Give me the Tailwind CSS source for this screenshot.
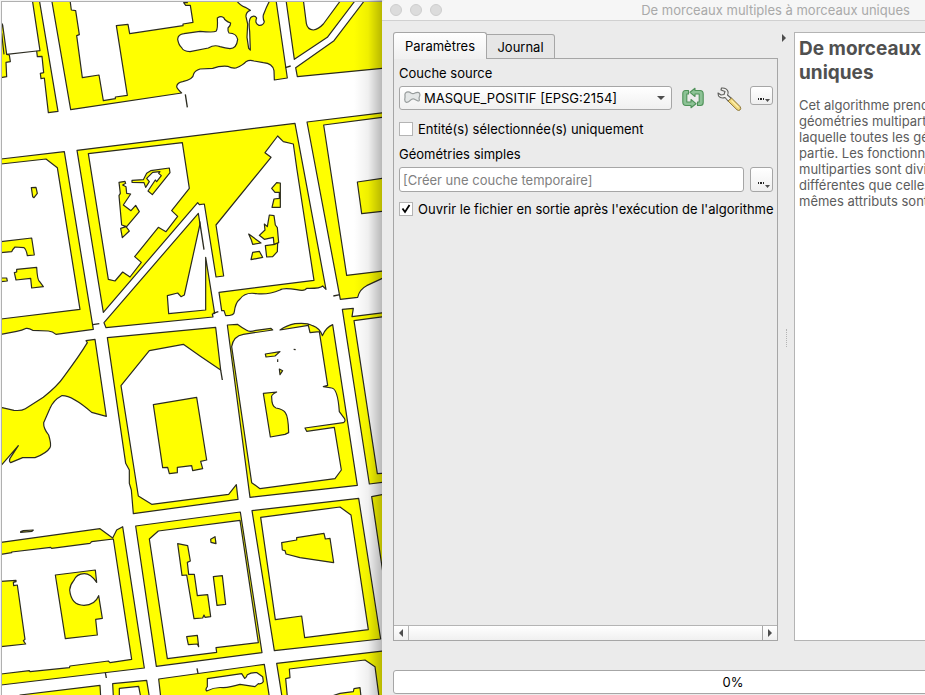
<!DOCTYPE html>
<html lang="fr">
<head>
<meta charset="utf-8">
<meta name="viewport" content="width=device-width, initial-scale=1">
<title>De morceaux multiples à morceaux uniques</title>
<script src="https://cdn.jsdelivr.net/npm/@tailwindcss/browser@4"></script>
</head>
<body class="flex h-screen overflow-hidden bg-[#ebebeb] font-['Inter','Liberation_Sans',sans-serif] text-[13px] leading-4 text-black">

<!-- Map canvas -->
<main class="relative h-full w-[382px] shrink-0 overflow-hidden bg-white">
  <svg class="h-full w-full" viewBox="0 0 1146 2085" preserveAspectRatio="xMinYMin slice" role="img" aria-label="Carte">
    <g fill="#ffff00" stroke="#2b2b20" stroke-width="3.600" stroke-linejoin="round">
      <!-- first row of blocks -->
      <path d="M97,0L120,152L110,153L112,170L126,169L131,218L121,220L123,236L133,234L145,338L174,334L118,0Z"/>
      <path d="M5,70L8,75L20,163L28,165L31,185L18,187L20,230L3,233Z"/>
      <path fill="none" d="M5,100L12,163M20,163L110,153"/>
      <path d="M155,0L212,329L545,279Q530,266 530,259Q532,248 548,245Q580,238 581,222Q584,212 600,207L638,205Q660,197 683,199Q696,206 708,204Q730,195 738,185Q748,179 762,183L790,188Q818,190 822,212L823,240L862,234L828,0Z"/>
      <path fill="#fff" d="M210,0L214,30L227,32L238,104L230,107L247,233L297,225L310,302L346,296L346,291L382,286L349,77L384,73L389,101L549,77L549,72L579,67L571,16L557,16L551,8L562,8L560,0Z"/>
      <path fill="#fff" d="M533,118Q534,103 552,101L600,94Q640,98 648,94Q654,88 652,54Q664,46 672,54Q674,62 692,69Q692,77 684,84Q683,94 687,99Q710,100 713,118Q710,145 690,146Q676,145 660,140Q643,133 625,144L570,155Q549,154 545,143Q536,135 533,118Z"/>
      <path fill="#fff" d="M708,0Q720,17 736,22L751,31Q737,36 738,50L743,72L741,112L746,145L751,150L749,95Q744,54 756,50Q764,46 770,54Q763,70 777,76Q790,77 793,65Q788,55 790,45Q798,23 810,0Z"/>
      <path d="M858,0L883,178L982,112L1067,0Z"/>
      <path fill="#fff" d="M910,0L919,70Q922,88 940,90Q955,88 970,72L1023,0Z"/>
      <path d="M1095,0L1002,122L887,203L892,230L1149,205V0Z"/>
      <path fill="none" stroke-width="4" d="M856,203L872,198M556,283L562,322"/>

      <!-- second row -->
      <path d="M3,477L193,455L280,988L168,1003Q158,994 145,993L98,991Q87,984 79,985Q66,992 50,994L3,1003Z"/>
      <path fill="#fff" d="M3,492L138,477L172,503L240,928L3,957Z"/>
      <path d="M94,563L108,562L112,580L102,593L98,590ZM3,725L95,714L103,765L82,767Q79,749 72,743L45,741Q38,748 35,755L3,758ZM50,808L110,802Q112,842 119,845L130,860L95,864L92,835L48,840L43,818L50,816ZM3,834L20,834L22,843L3,845Z"/>
      <path d="M231,451L885,370L978,868L968,858Q960,866 920,865Q915,875 890,869Q850,862 840,870Q805,885 770,881Q735,875 720,897Q706,908 703,935Q703,947 677,947L672,932L665,932L657,877L942,841L891,510L880,432L850,425L833,408L795,458L813,472L648,675L671,828L648,831L613,612L598,614L593,608L310,937Z"/>
      <path fill="#fff" d="M265,461L547,428L568,565L515,632L533,649L498,695L475,682L404,770L424,787L390,831L368,816L345,843L325,838Z"/>
      <path d="M396,541L430,539L440,520L452,512L508,504L510,518L457,584L444,573L466,540L470,545L484,527L476,520L480,515L458,517L440,535L448,545L437,562L432,548L396,547ZM357,547L375,544L377,550L368,555L378,560L380,580L392,582L370,615L393,632L407,616L418,635L380,680L365,675L357,587L361,580ZM362,685L378,680L388,693L367,713Z"/>
      <path d="M595,640L600,672L553,885L543,890L533,879L502,887L506,941L617,930L617,772L644,940L637,942L639,951L318,983L312,968Z"/>
      <path fill="none" stroke-width="4" d="M599,664L612,749M278,974L298,971M639,940L655,935M1000,888L1020,884"/>
      <path d="M815,565L830,548L841,549L841,622L816,622L822,597L838,595L838,577L825,577ZM808,645L822,647L826,675L832,683L836,728L822,733L820,712L793,718L778,706L795,690L793,672L802,680ZM796,737L825,733L833,729L832,755L818,770L800,771ZM746,702L783,729L758,733L754,720ZM758,757L778,754L788,772L753,779Z"/>
      <path d="M921,366L1149,338V352L971,375L1040,826L1149,813V834L1100,857Q1078,868 1073,892L1021,898Z"/>
      <path d="M1072,546L1149,535V634L1085,641Z"/>

      <!-- third row -->
      <path d="M258,1022L285,1018L319,1249L275,1237Q215,1185 185,1187Q160,1200 150,1225L131,1268Q130,1285 146,1305Q155,1335 150,1343Q140,1360 105,1373L68,1373L32,1388Q26,1385 30,1375L55,1337L3,1397V1222L42,1231Q65,1233 76,1226L130,1192Q175,1155 190,1132Q240,1065 262,1028Z"/>
      <path d="M322,1013L647,982L662,1110L600,1068L550,1033L448,1052L363,1157L415,1488L455,1513L686,1483L709,1454L714,1498L400,1541L394,1470L388,1450V1410L377,1390Z"/>
      <path fill="none" stroke-width="4" d="M662,1110L667,1140"/>
      <path d="M460,1214L590,1192L620,1380L602,1384L608,1406L578,1412L575,1397L532,1402V1418L508,1421L503,1402L488,1403Z"/>
      <path d="M682,975L712,973Q728,985 740,991Q748,997 768,991L813,985L818,990L730,1003Q700,1008 695,1040L755,1448L780,1466L1005,1436L1024,1410L1003,1282L920,1294L915,1284L1030,1268Q1038,1264 1033,1255L1018,1235Q1013,1165 995,1164L970,1160L983,1156L958,995L930,998L925,976L840,990Q860,976 885,971Q920,967 938,977Q960,985 967,1007Q978,982 998,974L1072,1456L750,1492Z"/>
      <path d="M796,1062L840,1055L825,1068L798,1071ZM838,1107L848,1112L840,1124ZM790,1180L830,1176Q812,1185 815,1192Q815,1220 828,1224Q850,1228 856,1238Q865,1250 866,1298L855,1303L811,1311ZM833,1078V1086M881,1048L887,1049"/>
      <path d="M1027,928L1060,925L1056,950L1149,938V950L1062,962L1132,1421L1149,1420V1447L1108,1452Z"/>

      <!-- fourth row -->
      <path d="M3,1627L300,1586L338,1614L350,1590L368,1580L433,2004L3,2055Z"/>
      <path fill="#fff" d="M3,1663L35,1658V1656L152,1642L155,1645L270,1630L275,1625L340,1617L395,1978L330,1988L325,1983L210,1998L208,2003L90,2015L88,2012L3,2022Z"/>
      <path d="M3,1744L48,1741V1745L40,1747L41,1757L52,1755L75,1918L70,1922L77,1932L3,1940ZM166,1725L286,1710L290,1747Q272,1721 253,1721C238,1721 226,1730 221,1742Q210,1755 209,1770C212,1800 228,1816 252,1816Q285,1815 296,1787L307,1855L287,1858L292,1905L196,1916ZM62,1595L70,1592L100,1590L96,1594L62,1597Z"/>
      <path d="M407,1578L721,1536L786,1958L469,1999Z"/>
      <path fill="#fff" d="M448,1617L475,1593L720,1561L775,1928L648,1943L650,1957L502,1976Z"/>
      <path d="M533,1631L563,1637L571,1683L562,1687L566,1723L583,1723L592,1787L623,1784L632,1850L615,1852L612,1845L608,1854L582,1856L560,1725L546,1726ZM640,1730L667,1727L677,1813L651,1816ZM632,1618L645,1610L648,1631L633,1627ZM560,1910L592,1906L596,1940L592,1932L565,1934Z"/>
      <path d="M756,1532L1076,1495L1142,1917L823,1952Z"/>
      <path fill="#fff" d="M782,1552L1020,1521L1053,1545L1105,1889L914,1913L905,1848L826,1859Z"/>
      <path d="M845,1628L890,1620V1613L972,1600L976,1617L990,1615L1001,1688L900,1673L858,1662L855,1652L847,1650Z"/>
      <path d="M1115,1490L1149,1483V1720Z"/>

      <!-- bottom row -->
      <path d="M60,2085L300,2056L302,2090H58ZM338,2051L440,2041L448,2090H340Z"/>
      <path fill="#fff" d="M358,2090V2065L416,2059L422,2090Z"/>
      <path d="M476,2037L793,1993L808,2090H482Z"/>
      <path fill="#fff" d="M622,2036L725,2021L734,2035Q738,2035 742,2024Q755,2016 771,2018L788,2030L790,2045Q785,2053 775,2051L765,2060L720,2053Q690,2062 670,2063Q645,2060 620,2073Q615,2068 622,2060Z"/>
      <path d="M830,1990L1149,1953V2090H846Z"/>
      <path fill="#fff" d="M868,2007L1095,1980L1125,2000L1137,2090H862L857,2036L870,2033Z"/>
      <path d="M990,2090L1020,2080L1060,2075L1062,2066L1080,2063L1083,2090Z"/>
      <path fill="none" stroke-width="4" d="M316,2018L319,2034M591,2005L594,2020"/>
    </g>
  </svg>
  <div class="pointer-events-none absolute inset-0 border-t border-l border-[#f4f4f4]">
    <div class="size-full border-t border-l border-[#b0b0b0]"></div>
  </div>
  <div class="pointer-events-none absolute inset-y-0 right-0 w-7 bg-linear-to-r from-black/0 via-black/6 to-black/28"></div>
</main>

<!-- Processing dialog, wider than the visible area -->
<section class="h-full min-w-0 flex-1 overflow-hidden" aria-labelledby="dialog-title">
  <div class="flex h-full w-[787px] flex-col">
    <header class="relative flex h-[21px] shrink-0 items-center justify-center rounded-tl-sm border-b border-[#d0d0d0] bg-[#f6f6f6]">
      <div class="absolute left-2 flex gap-2">
        <button type="button" aria-label="Fermer" class="size-3 rounded-full border border-[#cecece] bg-[#dcdcdc]"></button>
        <button type="button" aria-label="Réduire" class="size-3 rounded-full border border-[#cecece] bg-[#dcdcdc]"></button>
        <button type="button" aria-label="Agrandir" class="size-3 rounded-full border border-[#cecece] bg-[#dcdcdc]"></button>
      </div>
      <h1 id="dialog-title" class="text-[#a9a9a9]">De morceaux multiples à morceaux uniques</h1>
    </header>

    <div class="flex min-h-0 flex-1 px-[11px] pt-[11px]">
      <div class="flex w-[385px] shrink-0 flex-col">
        <div role="tablist" class="relative -mb-px flex items-end">
          <button type="button" role="tab" aria-selected="true" class="h-[27px] w-[94px] rounded-t-[3px] border border-b-0 border-[#a6a6a6] bg-linear-to-b from-white to-[#f0f0f0]">Paramètres</button>
          <button type="button" role="tab" aria-selected="false" class="h-[25px] w-[68px] rounded-tr-[3px] border border-l-0 border-[#a6a6a6] bg-[#e6e6e6]">Journal</button>
        </div>
        <div role="tabpanel" class="flex min-h-0 flex-1 flex-col border border-[#a6a6a6]">
          <form class="flex flex-1 flex-col pt-[6px] pr-1 pl-[5px]">
            <label for="source">Couche source</label>
            <div class="mt-[5px] flex items-start">
              <div class="relative w-[273px]">
                <select id="source" class="h-6 w-full appearance-none rounded-[3px] border border-[#a6a6a6] bg-linear-to-b from-white to-[#f0f0f0] pl-6">
                  <option>MASQUE_POSITIF [EPSG:2154]</option>
                </select>
                <svg class="pointer-events-none absolute top-1 left-1 h-4 w-[18px]" viewBox="0 0 18 16" fill="#e4e7e7" stroke="#969b9b" stroke-width="1.2" stroke-linejoin="round"><path d="M3.500,2.200Q6,1.500 8,3Q10,4.200 12,3Q14,1.800 16,2.600Q17.500,4 16.500,6.500Q15.800,8 16.300,9.500Q16.600,11 15,11Q13,10.200 11,9Q9,8.500 7.500,10.200Q5.500,12.500 3.500,12.300Q1.500,12 1.800,9Q2.200,7 1.900,4.500Q2,2.800 3.500,2.200Z"/></svg>
                <svg class="pointer-events-none absolute top-2.5 right-[7px] h-1 w-2" viewBox="0 0 8 4" fill="#4d4d4d"><path d="M0,0H8L4,4Z"/></svg>
              </div>
              <button type="button" aria-label="Itérer sur cette couche" class="ml-2.5">
                <svg class="h-6 w-[22px]" viewBox="0 0 22 24" fill="#8cc295" stroke="#4f9259" stroke-width="1.100" stroke-linejoin="round"><path d="M6.500,4.500H3.500Q0.800,4.500 0.800,7.500V16Q0.800,19.500 4,19.500H9V21.800L14,17.700L9,13.500V16H4.800V8H6.500Z"/><path d="M15.500,19.500H18.500Q21.200,19.500 21.200,16.500V8Q21.200,4.500 18,4.500H13V2.200L8,6.300L13,10.500V8H17.200V16H15.500Z"/></svg>
              </button>
              <button type="button" aria-label="Options avancées" class="ml-3">
                <svg class="size-[26px]" viewBox="0 0 26 26" stroke-linejoin="round"><path fill="#f1f1ef" stroke="#5d5d5a" stroke-width="1.100" d="M5.500,2Q10.500,1.500 12,5.500Q12.500,7.500 11.500,9L15.500,12.500L12.500,15.500L9,11.500Q5,13 2.500,10L2,7L5,9L8,8.500L9,5.500L5,4Z"/><path fill="#f0d77a" stroke="#8c7638" stroke-width="1" d="M12,15L15.500,12L24,20.500Q25.500,22.500 24,24Q22.500,25 21,23.800Z"/><path fill="none" stroke="#fff0ac" stroke-width="1.300" d="M15.500,14.500L22.500,21.500"/></svg>
              </button>
              <button type="button" aria-label="Options de la source" class="ml-auto h-[19px] w-[23px] rounded-[3px] border border-[#a6a6a6] bg-linear-to-b from-white to-[#efefef]">
                <svg class="h-full w-full" viewBox="0 0 21 17"><path d="M7,11h1v2h-1zM9,11h2v2h-2zM12,11h1v2h-1z" fill="#252525"/><path d="M14,12h5l-2.500,3z" fill="#4d4d4d"/></svg>
              </button>
            </div>
            <label class="mt-[9px] flex items-center gap-[5px]">
              <input type="checkbox" class="size-3.5 appearance-none border border-[#b4b4b4] bg-white">
              Entité(s) sélectionnée(s) uniquement
            </label>
            <label for="output" class="mt-[9px]">Géométries simples</label>
            <div class="mt-[5px] flex justify-between">
              <input id="output" type="text" placeholder="[Créer une couche temporaire]" class="h-[25px] w-[345px] rounded-[3px] border border-[#a6a6a6] bg-white px-[3px] placeholder:text-[#808080]">
              <button type="button" aria-label="Options de sortie" class="h-[25px] w-[23px] rounded-[3px] border border-[#a6a6a6] bg-linear-to-b from-white to-[#efefef]">
                <svg class="h-full w-full" viewBox="0 0 21 23"><path d="M7,14h1v2h-1zM9,14h2v2h-2zM12,14h1v2h-1z" fill="#252525"/><path d="M14,17h5l-2.500,3z" fill="#4d4d4d"/></svg>
              </button>
            </div>
            <label class="mt-[9px] flex items-center gap-[5px] whitespace-nowrap">
              <span class="relative flex size-3.5 shrink-0">
                <input type="checkbox" checked class="size-3.5 appearance-none border border-[#b4b4b4] bg-white">
                <svg class="pointer-events-none absolute inset-0 size-3.5" viewBox="0 0 14 14" fill="none" stroke="#000" stroke-width="1.800"><path d="M3.500,6.500L6,10L10.500,3"/></svg>
              </span>
              Ouvrir le fichier en sortie après l'exécution de l'algorithme
            </label>
          </form>
          <div class="flex h-[15px] border-t border-[#b4b4b4] bg-linear-to-b from-white to-[#f0f0f0]">
            <button type="button" aria-label="Défiler à gauche" class="flex w-[15px] items-center justify-center border-r border-[#b4b4b4]"><svg class="h-2 w-1" viewBox="0 0 4 8" fill="#4d4d4d"><path d="M4,0V8L0,4Z"/></svg></button>
            <div class="flex-1"></div>
            <button type="button" aria-label="Défiler à droite" class="flex w-[15px] items-center justify-center border-l border-[#a6a6a6]"><svg class="h-2 w-1" viewBox="0 0 4 8" fill="#4d4d4d"><path d="M0,0V8L4,4Z"/></svg></button>
          </div>
        </div>
      </div>

      <div class="flex w-4 shrink-0 flex-col items-center">
        <button type="button" aria-label="Replier l'aide" class="mt-0.5 mr-1"><svg class="h-2 w-1" viewBox="0 0 4 8" fill="#4d4d4d"><path d="M0,0V8L4,4Z"/></svg></button>
        <div class="mt-auto mb-auto h-[18px] border-l border-dotted border-[#b4b4b4]"></div>
        <div class="h-2"></div>
      </div>

      <article class="flex-1 border border-[#b4b4b4] bg-white px-1 pt-1 whitespace-nowrap text-[#5c5c5c]">
        <h2 class="text-[19px] leading-6 font-bold text-[#505050]">De morceaux multiples à morceaux<br>uniques</h2>
        <p class="mt-3">Cet algorithme prend une couche vecteur avec des<br>géométries multiparties et en crée une nouvelle dans<br>laquelle toutes les géométries ont une seule<br>partie. Les fonctionnalités avec des géométries<br>multiparties sont divisées en autant d'entités<br>différentes que celles de la géométrie, et les<br>mêmes attributs sont utilisés pour chacune.</p>
      </article>
    </div>

    <footer class="px-[11px] pt-[29px] pb-px">
      <div role="progressbar" aria-valuenow="0" aria-valuemin="0" aria-valuemax="100" class="flex h-6 w-[680px] items-center justify-center rounded-[3px] border border-[#a6a6a6] bg-white">0%</div>
    </footer>
  </div>
</section>
</body>
</html>
